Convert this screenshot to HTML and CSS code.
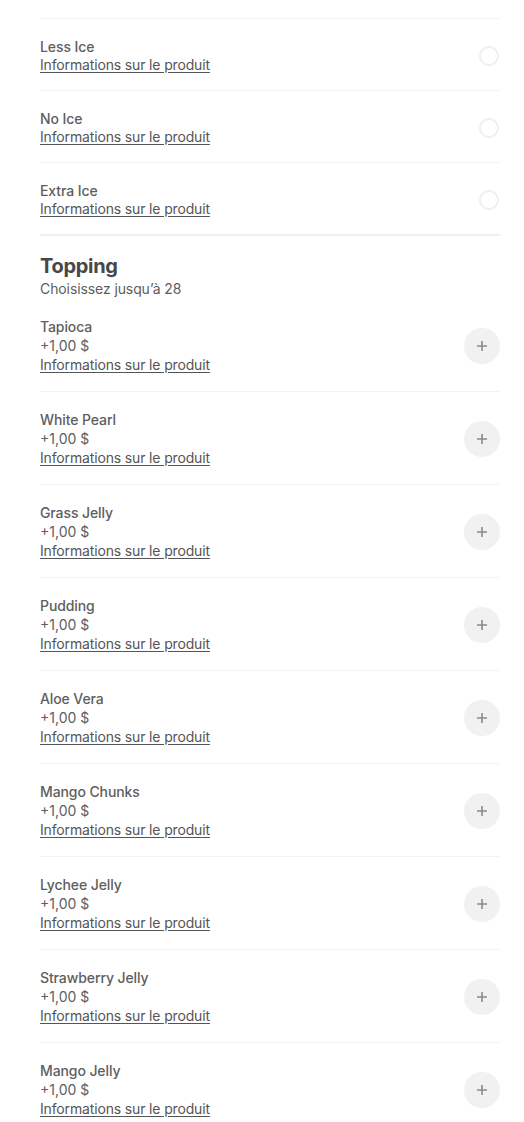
FILE: index.html
```html
<!DOCTYPE html>
<html lang="fr">
<head>
<meta charset="utf-8">
<link rel="stylesheet" href="styles.css">
</head>
<body>
<div class="page">
  <div class="divider-top"></div>
  <div class="ice-list">
    <div class="row radio-row">
      <div class="info"><div class="name">Less Ice</div><a class="link" href="#">Informations sur le produit</a></div>
      <span class="radio"></span>
    </div>
    <div class="row radio-row">
      <div class="info"><div class="name">No Ice</div><a class="link" href="#">Informations sur le produit</a></div>
      <span class="radio"></span>
    </div>
    <div class="row radio-row last">
      <div class="info"><div class="name">Extra Ice</div><a class="link" href="#">Informations sur le produit</a></div>
      <span class="radio"></span>
    </div>
  </div>
  <div class="section-head">
    <h2 class="title">Topping</h2>
    <div class="sub">Choisissez jusqu’à 28</div>
  </div>
  <div class="topping-list">
    <div class="row topping-row"><div class="info"><div class="name">Tapioca</div><div class="price">+1,00 $</div><a class="link" href="#">Informations sur le produit</a></div><button class="add"><svg viewBox="0 0 12 12" width="12" height="12"><path d="M6 1v10M1 6h10"/></svg></button></div>
    <div class="row topping-row"><div class="info"><div class="name">White Pearl</div><div class="price">+1,00 $</div><a class="link" href="#">Informations sur le produit</a></div><button class="add"><svg viewBox="0 0 12 12" width="12" height="12"><path d="M6 1v10M1 6h10"/></svg></button></div>
    <div class="row topping-row"><div class="info"><div class="name">Grass Jelly</div><div class="price">+1,00 $</div><a class="link" href="#">Informations sur le produit</a></div><button class="add"><svg viewBox="0 0 12 12" width="12" height="12"><path d="M6 1v10M1 6h10"/></svg></button></div>
    <div class="row topping-row"><div class="info"><div class="name">Pudding</div><div class="price">+1,00 $</div><a class="link" href="#">Informations sur le produit</a></div><button class="add"><svg viewBox="0 0 12 12" width="12" height="12"><path d="M6 1v10M1 6h10"/></svg></button></div>
    <div class="row topping-row"><div class="info"><div class="name">Aloe Vera</div><div class="price">+1,00 $</div><a class="link" href="#">Informations sur le produit</a></div><button class="add"><svg viewBox="0 0 12 12" width="12" height="12"><path d="M6 1v10M1 6h10"/></svg></button></div>
    <div class="row topping-row"><div class="info"><div class="name">Mango Chunks</div><div class="price">+1,00 $</div><a class="link" href="#">Informations sur le produit</a></div><button class="add"><svg viewBox="0 0 12 12" width="12" height="12"><path d="M6 1v10M1 6h10"/></svg></button></div>
    <div class="row topping-row"><div class="info"><div class="name">Lychee Jelly</div><div class="price">+1,00 $</div><a class="link" href="#">Informations sur le produit</a></div><button class="add"><svg viewBox="0 0 12 12" width="12" height="12"><path d="M6 1v10M1 6h10"/></svg></button></div>
    <div class="row topping-row"><div class="info"><div class="name">Strawberry Jelly</div><div class="price">+1,00 $</div><a class="link" href="#">Informations sur le produit</a></div><button class="add"><svg viewBox="0 0 12 12" width="12" height="12"><path d="M6 1v10M1 6h10"/></svg></button></div>
    <div class="row topping-row"><div class="info"><div class="name">Mango Jelly</div><div class="price">+1,00 $</div><a class="link" href="#">Informations sur le produit</a></div><button class="add"><svg viewBox="0 0 12 12" width="12" height="12"><path d="M6 1v10M1 6h10"/></svg></button></div>
  </div>
</div>
</body>
</html>
```

FILE: styles.css
```css
html, body {
  margin: 0;
  padding: 0;
  background: #ffffff;
}
body {
  font-family: Inter, "Noto Sans", "Liberation Sans", sans-serif;
  font-size: 14px;
  color: #5e5e5e;
}
.page {
  padding: 18px 24px 0 40px;
}
.divider-top {
  height: 1px;
  background: #f3f3f3;
}
.row {
  display: flex;
  align-items: center;
  justify-content: space-between;
  border-bottom: 1px solid #f3f3f3;
}
.radio-row {
  padding: 19px 0 16px;
}
.radio-row.last {
  border-bottom: 2px solid #f1f1f1;
}
.info {
  display: flex;
  flex-direction: column;
  align-items: flex-start;
}
.name {
  font-weight: 500;
  line-height: 18px;
  color: #5e5e5e;
  letter-spacing: -0.1px;
}
.link {
  line-height: 18px;
  color: #555555;
  text-decoration: underline;
  text-underline-offset: 2px;
  letter-spacing: -0.15px;
}
.radio {
  box-sizing: border-box;
  width: 20px;
  height: 20px;
  border: 2.5px solid #efefef;
  border-radius: 50%;
  margin-right: 1px;
}
.section-head {
  padding-top: 17px;
}
.title {
  margin: 0;
  font-size: 20px;
  line-height: 26px;
  font-weight: 700;
  color: #474747;
  letter-spacing: -0.3px;
}
.sub {
  line-height: 20px;
  color: #5e5e5e;
  letter-spacing: -0.1px;
}
.topping-row {
  padding: 18px 0 16px;
}
.topping-row .name {
  line-height: 19px;
}
.price {
  line-height: 19px;
  color: #5e5e5e;
}
.topping-row .link {
  line-height: 20px;
}
.add {
  width: 36px;
  height: 36px;
  border: none;
  border-radius: 50%;
  background: #f1f1f1;
  display: flex;
  align-items: center;
  justify-content: center;
  padding: 0;
}
.add svg {
  stroke: #8a8a8a;
  stroke-width: 1.6;
  fill: none;
}
```
